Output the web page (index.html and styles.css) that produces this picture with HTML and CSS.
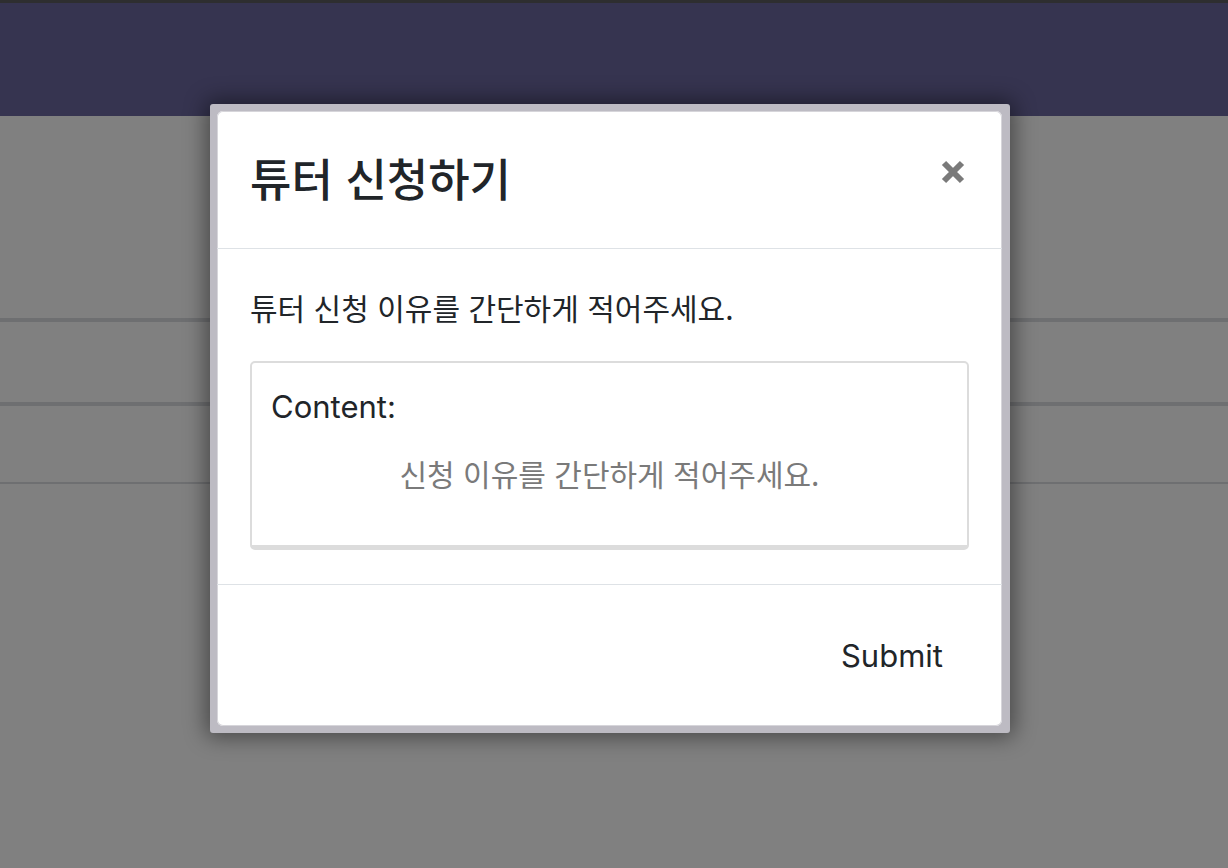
FILE: index.html
```html
<!DOCTYPE html>
<html lang="ko">
<head>
<meta charset="utf-8">
<link rel="stylesheet" href="styles.css">
</head>
<body>
<div class="topstrip"></div>
<header class="navbar"></header>
<main class="page">
  <div class="row row-a"></div>
  <div class="row row-b"></div>
  <div class="row row-c"></div>
</main>

<div class="modal">
  <div class="modal-content">
    <div class="modal-header">
      <h2 class="modal-title">튜터 신청하기</h2>
      <span class="close">
        <svg width="26" height="26" viewBox="0 0 26 26"><path d="M4 4 L22 22 M22 4 L4 22" stroke="#7a7a7a" stroke-width="6" stroke-linecap="butt"/></svg>
      </span>
    </div>
    <div class="modal-body">
      <p class="lead">튜터 신청 이유를 간단하게 적어주세요.</p>
      <div class="textbox">
        <div class="label">Content:</div>
        <div class="placeholder">신청 이유를 간단하게 적어주세요.</div>
      </div>
    </div>
    <div class="modal-footer">
      <button class="submit">Submit</button>
    </div>
  </div>
</div>
</body>
</html>
```

FILE: styles.css
```css
html, body {
  margin: 0;
  padding: 0;
}
body {
  width: 1228px;
  height: 868px;
  overflow: hidden;
  background: #808080;
  font-family: Inter, "Noto Sans CJK KR", sans-serif;
  color: #212529;
}
.topstrip {
  height: 3px;
  background: #2e2e30;
}
.navbar {
  height: 113px;
  background: #363450;
}
.row {
  border-bottom: 4px solid #6e6f71;
}
.row-a { height: 202px; }
.row-b { height: 80px; }
.row-c { height: 76px; border-bottom-width: 2px; }

.modal {
  position: absolute;
  left: 210px;
  top: 104px;
  width: 800px;
  height: 629px;
  box-sizing: border-box;
  border: 7px solid #bdbbc3;
  border-right-width: 8px;
  border-radius: 3px;
  box-shadow: 0 0 22px 4px rgba(0, 0, 0, 0.45);
  background: #bdbbc3;
}
.modal-content {
  height: 100%;
  background: #fff;
  border-radius: 6px;
  box-shadow: 0 0 0 1px #d6d5da inset;
  display: flex;
  flex-direction: column;
}
.modal-header {
  height: 138px;
  flex: none;
  box-sizing: border-box;
  border-bottom: 1px solid #dee2e6;
  display: flex;
  align-items: center;
  justify-content: space-between;
  padding: 0 36px 4px 33px;
}
.modal-title {
  margin: 0;
  font-family: "Noto Sans CJK KR", sans-serif;
  font-size: 45px;
  font-weight: 500;
  line-height: 56px;
  color: #212529;
}
.close {
  display: flex;
  margin-top: -12px;
}
.modal-body {
  height: 336px;
  flex: none;
  box-sizing: border-box;
  border-bottom: 1px solid #dee2e6;
  padding: 38px 33px 0 33px;
}
.lead {
  margin: 0;
  font-family: "Noto Sans CJK KR", sans-serif;
  font-size: 30px;
  line-height: 40px;
}
.textbox {
  margin-top: 34px;
  height: 189px;
  box-sizing: border-box;
  border: 2px solid #dcdcdc;
  border-bottom-width: 5px;
  border-radius: 5px;
  padding: 26px 19px 0 19px;
}
.label {
  font-size: 31px;
  line-height: 36px;
}
.placeholder {
  margin-top: 30px;
  text-align: center;
  font-family: "Noto Sans CJK KR", sans-serif;
  font-size: 30px;
  line-height: 36px;
  color: #7a7a7a;
}
.modal-footer {
  flex: 1;
  display: flex;
  align-items: center;
  justify-content: flex-end;
  padding: 0 59px 0 0;
}
.submit {
  border: none;
  background: none;
  padding: 0;
  font-family: Inter, sans-serif;
  font-size: 31px;
  color: #212529;
}
```
